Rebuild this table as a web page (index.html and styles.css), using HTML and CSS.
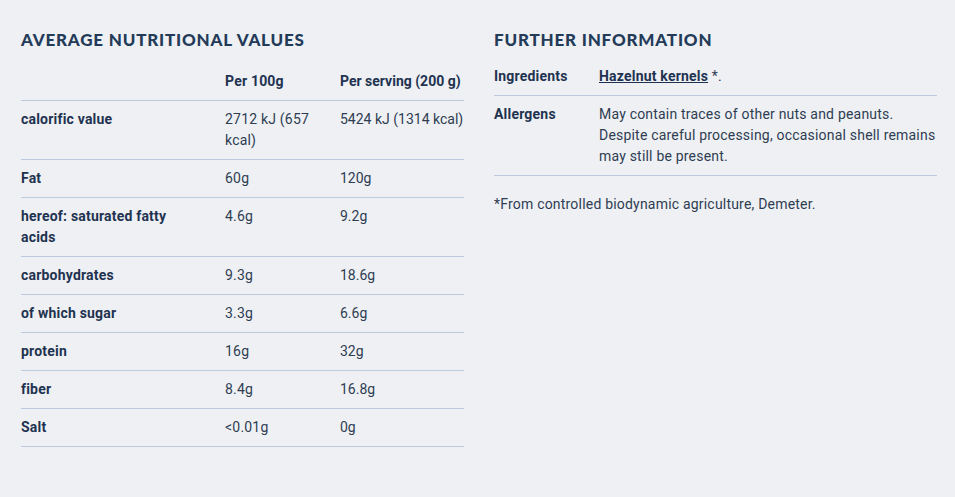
FILE: index.html
```html
<!DOCTYPE html>
<html lang="en">
<head>
<meta charset="utf-8">
<title>Nutritional values</title>
<link rel="stylesheet" href="styles.css">
</head>
<body>
<div class="page">
  <section class="col">
    <h2 class="title title-left">Average nutritional values</h2>
    <table class="nutri">
      <colgroup><col class="c1"><col class="c2"><col class="c3"></colgroup>
      <thead>
        <tr><th></th><th>Per 100g</th><th>Per serving (200 g)</th></tr>
      </thead>
      <tbody>
        <tr><th>calorific value</th><td>2712 kJ (657 kcal)</td><td>5424 kJ (1314 kcal)</td></tr>
        <tr><th>Fat</th><td>60g</td><td>120g</td></tr>
        <tr><th>hereof: saturated fatty acids</th><td>4.6g</td><td>9.2g</td></tr>
        <tr><th>carbohydrates</th><td>9.3g</td><td>18.6g</td></tr>
        <tr><th>of which sugar</th><td>3.3g</td><td>6.6g</td></tr>
        <tr><th>protein</th><td>16g</td><td>32g</td></tr>
        <tr><th>fiber</th><td>8.4g</td><td>16.8g</td></tr>
        <tr><th>Salt</th><td>&lt;0.01g</td><td>0g</td></tr>
      </tbody>
    </table>
  </section>
  <section class="col">
    <h2 class="title title-right">Further information</h2>
    <table class="info">
      <colgroup><col class="i1"><col class="i2"></colgroup>
      <tbody>
        <tr><th>Ingredients</th><td><a class="link" href="#">Hazelnut kernels</a> *.</td></tr>
        <tr><th>Allergens</th><td>May contain traces of other nuts and peanuts. Despite careful processing, occasional shell remains may still be present.</td></tr>
      </tbody>
    </table>
    <p class="note">*From controlled biodynamic agriculture, Demeter.</p>
  </section>
</div>
</body>
</html>
```

FILE: styles.css
```css
html, body {
  margin: 0;
  padding: 0;
  background: #eef0f4;
}
body {
  font-family: Roboto, "Noto Sans", sans-serif;
  font-size: 14px;
  line-height: 21px;
  letter-spacing: 0.2px;
  color: #2e3d52;
}
.page {
  display: flex;
  gap: 30px;
  padding: 29px 0 0 21px;
}
.col {
  width: 443px;
}
.title {
  margin: 0;
  font-family: Lato, sans-serif;
  font-weight: 900;
  font-size: 17px;
  line-height: 21px;
  letter-spacing: 0.8px;
  text-transform: uppercase;
  color: #233b58;
}
.title-left { margin-bottom: 13px; }
.title-right { margin-bottom: 8px; }
table {
  width: 100%;
  border-collapse: collapse;
  table-layout: fixed;
}
.c1 { width: 204px; }
.c2 { width: 115px; }
.c3 { width: 124px; }
.i1 { width: 105px; }
.i2 { width: 338px; }
tr {
  border-bottom: 1px solid #bccbdd;
}
th, td {
  text-align: left;
  vertical-align: top;
  padding: 8px 30px 8px 0;
}
th:last-child, td:last-child {
  padding-right: 0;
}
.nutri th:last-child, .nutri td:last-child {
  white-space: nowrap;
  letter-spacing: 0;
}
th {
  font-weight: 700;
  color: #1f3350;
}
.link {
  color: #1f3350;
  font-weight: 700;
  text-decoration: underline;
}
.note {
  margin: 18px 0 0;
}
```
